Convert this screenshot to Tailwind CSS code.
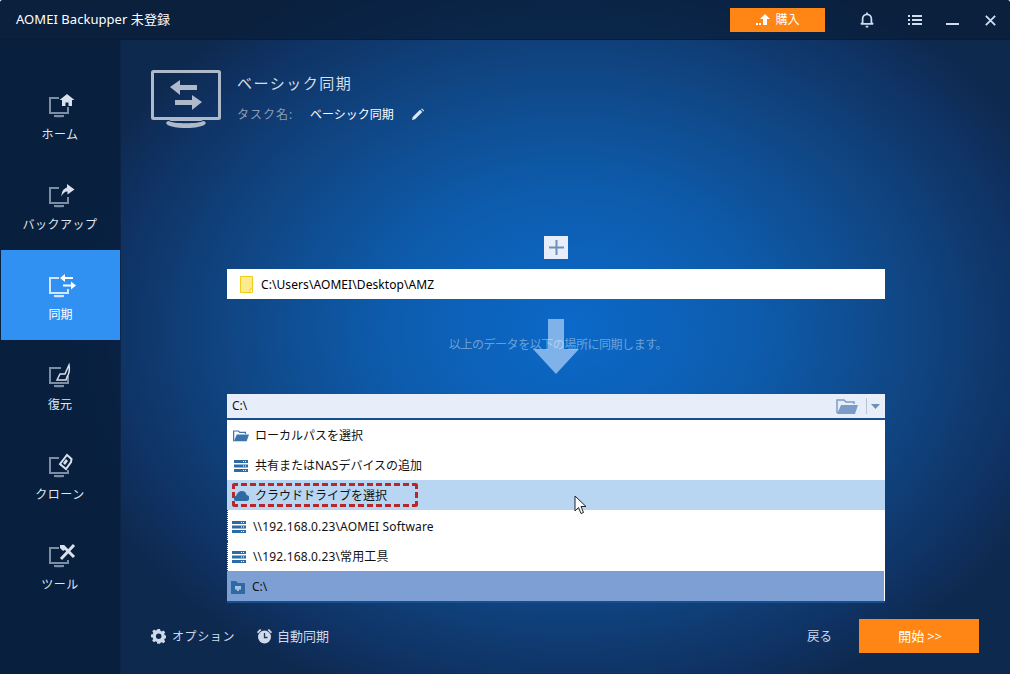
<!DOCTYPE html>
<html lang="ja">

<head>
    <meta charset="UTF-8">
    <script src="https://cdn.jsdelivr.net/npm/@tailwindcss/browser@4"></script>
    <title>AOMEI Backupper</title>
</head>

<body class="bg-white">
    <div class="relative w-[1010px] h-[674px] overflow-hidden flex flex-col rounded-t-[3px] text-[12px] font-['Noto_Sans','Noto_Sans_CJK_JP',sans-serif] bg-[radial-gradient(ellipse_520px_400px_at_570px_330px,#0b69c9_0%,#0d5cad_35%,#104684_65%,#0f3161_90%,#0e294e_100%)]">
        <!-- Title bar -->
        <header class="h-[40px] shrink-0 flex items-center bg-[#081c36]/70 border-b border-[#0a1c36] text-white">
            <span class="ml-[16px] text-[13px] tracking-[0.05px]">AOMEI Backupper 未登録</span>
            <button class="ml-auto w-[95px] h-[24px] flex items-center justify-center gap-[4px] bg-[#ff8615] text-[12px] pt-px">
                <svg width="16" height="14" viewBox="0 0 16 14" fill="#fff">
                    <path d="M10 1l5 5h-3v6H8V6H5z" />
                    <path d="M1 10h2v2H1zM4 10h2v2H4z" />
                </svg>
                購入
            </button>
            <div class="ml-[35px] mr-[14px] flex items-center text-[#cfdcef]">
                <svg width="14" height="17" viewBox="0 0 16 18" fill="none" stroke="currentColor" stroke-width="2">
                    <path d="M3 13V8a5 5 0 0 1 10 0v5l2 1H1z" />
                    <path d="M6.500 17h3M8 1v2" />
                </svg>
                <svg class="ml-[34px]" width="14" height="12" viewBox="0 0 14 12" fill="currentColor">
                    <path d="M0 1h2v2H0zM4 1h10v2H4zM0 5h2v2H0zM4 5h10v2H4zM0 9h2v2H0zM4 9h10v2H4z" />
                </svg>
                <span class="ml-[24px] w-[13px] h-[2px] mt-[8px] bg-current"></span>
                <svg class="ml-[26px] mt-[1px]" width="11" height="11" viewBox="0 0 13 13" fill="none" stroke="currentColor" stroke-width="2.200">
                    <path d="M1 1l11 11M12 1L1 12" />
                </svg>
            </div>
        </header>

        <div class="flex-1 flex min-h-0">
            <!-- Sidebar -->
            <nav class="w-[121px] shrink-0 pt-[30px] bg-[#081d39]/80 border-r border-[#0c2445] text-[#dfe7f2] flex flex-col">
                <a class="h-[90px] flex flex-col items-center pt-[22px] gap-[6px] tracking-[0.5px]">
                    <svg class="ml-[4px]" width="30" height="28" viewBox="0 0 30 28" fill="none">
                        <path d="M12 6H3v15h18v-6" stroke="#7d8da4" stroke-width="2" />
                        <path d="M7 23h10v2a12 3 0 0 1-10 0z" fill="#7d8da4" />
                        <path d="M20 2l7.500 6H25v6h-3.500v-3.500h-3V14H15V8h-2.500z" fill="#d8e0eb" />
                    </svg>
                    ホーム
                </a>
                <a class="h-[90px] flex flex-col items-center pt-[22px] gap-[6px] tracking-[0.5px]">
                    <svg class="ml-[4px]" width="30" height="28" viewBox="0 0 30 28" fill="none">
                        <path d="M12 6H3v15h18v-6" stroke="#7d8da4" stroke-width="2" />
                        <path d="M7 23h10v2a12 3 0 0 1-10 0z" fill="#7d8da4" />
                        <path d="M20 2l7.500 5.500-7 5v-3c-3 0-5 2-6 5 0-5 2-8 5.500-9z" fill="#d8e0eb" />
                    </svg>
                    バックアップ
                </a>
                <a class="h-[90px] ml-[1px] flex flex-col items-center pt-[22px] gap-[6px] bg-[#3191f3] text-white">
                    <svg class="ml-[3px]" width="30" height="28" viewBox="0 0 30 28" fill="none">
                        <path d="M12 6H3v15h18v-4" stroke="#d3e6fb" stroke-width="2" />
                        <path d="M7 23h10v2a12 3 0 0 1-10 0z" fill="#d3e6fb" />
                        <path d="M13 6l5-4v3h8v2h-8v3zM29 13.500l-5-4v3h-8v2h8v3z" fill="#fff" />
                    </svg>
                    同期
                </a>
                <a class="h-[90px] flex flex-col items-center pt-[22px] gap-[6px]">
                    <svg class="ml-[4px]" width="30" height="28" viewBox="0 0 30 28" fill="none">
                        <path d="M14 6H3v15h18v-7" stroke="#7d8da4" stroke-width="2" />
                        <path d="M7 23h10v2a12 3 0 0 1-10 0z" fill="#7d8da4" />
                        <path d="M10 18l3-6 5 0 4-9c1 5 0 9-2 12l-1 3z" fill="none" stroke="#d8e0eb" stroke-width="1.500" />
                    </svg>
                    復元
                </a>
                <a class="h-[90px] flex flex-col items-center pt-[22px] gap-[6px] tracking-[0.5px]">
                    <svg class="ml-[4px]" width="30" height="28" viewBox="0 0 30 28" fill="none">
                        <path d="M12 6H3v15h18v-3" stroke="#7d8da4" stroke-width="2" />
                        <path d="M7 23h10v2a12 3 0 0 1-10 0z" fill="#7d8da4" />
                        <path d="M20 3l4.500 4-.5 3-5 7-6-5z" stroke="#d8e0eb" stroke-width="2" />
                        <path d="M19 7l2 2-3 4-2-2z" fill="#d8e0eb" />
                    </svg>
                    クローン
                </a>
                <a class="h-[90px] flex flex-col items-center pt-[22px] gap-[6px] tracking-[0.5px]">
                    <svg class="ml-[4px]" width="30" height="28" viewBox="0 0 30 28" fill="none">
                        <path d="M12 6H3v15h18v-3" stroke="#7d8da4" stroke-width="2" />
                        <path d="M7 23h10v2a12 3 0 0 1-10 0z" fill="#7d8da4" />
                        <path d="M16 4l11 11" stroke="#d8e0eb" stroke-width="3" />
                        <path d="M27 3L14 17" stroke="#d8e0eb" stroke-width="3" />
                        <path d="M13 3h4l2 4-3 2-3-3z" fill="#d8e0eb" />
                    </svg>
                    ツール
                </a>
            </nav>

            <!-- Main -->
            <main class="relative flex-1 min-w-0 flex flex-col">
                <div class="h-[196px] shrink-0 pl-[30px] pt-[30px] flex items-start">
                    <svg width="72" height="60" viewBox="0 0 72 60" fill="none">
                        <rect x="1.500" y="1.500" width="67" height="47" stroke="#aeb9c9" stroke-width="3" rx="1" />
                        <path d="M18 50h34l-2 1h-30zM18 51c-6 1-3 7 17 7s23-6 17-7c-3 3-31 3-34 0z" fill="#aeb9c9" />
                        <path d="M19 17l10-7v5h17v5H29v5zM51 32l-10-7v5H24v5h17v5z" fill="#aeb9c9" />
                    </svg>
                    <div class="ml-[14px]">
                        <h1 class="mt-[2px] text-[15px] tracking-[1.500px] text-[#d5deea]">ベーシック同期</h1>
                        <div class="mt-[11px] flex items-center">
                            <span class="w-[73px] tracking-[1px] text-[#8c9cb2]">タスク名:</span>
                            <span class="text-white">ベーシック同期</span>
                            <svg class="ml-[17px]" width="13" height="13" viewBox="0 0 13 13" fill="#dfe6f0">
                                <path d="M1 12l.7-3L9 1.700 11.300 4 4 11.300zM10 1l1-.5 2 2-.5 1z" />
                            </svg>
                        </div>
                    </div>
                </div>

                <div class="ml-[106px] w-[658px] flex flex-col">
                    <div class="self-center w-[24px] h-[23px] flex items-center justify-center bg-[#e7eefa]">
                        <svg width="15" height="15" viewBox="0 0 15 15" fill="#6f8fb8">
                            <path d="M6.500 0h2v6.500H15v2H8.500V15h-2V8.500H0v-2h6.500z" />
                        </svg>
                    </div>
                    <div class="mt-[10px] h-[30px] flex items-center bg-white pl-[13px] text-black">
                        <svg width="13" height="17" viewBox="0 0 13 17">
                            <path d="M.5.5h12v16H.5z" fill="#fde98e" stroke="#f2cc1a" />
                            <path d="M10 13h2.500v3.500H10z" fill="#fff" stroke="#f2cc1a" />
                        </svg>
                        <span class="ml-[8px] pt-[2px] tracking-[0.08px]">C:\Users\AOMEI\Desktop\AMZ</span>
                    </div>

                    <div class="relative h-[95px] flex items-center justify-center">
                        <!-- big arrow behind the hint -->
                        <svg class="absolute left-[306px] top-[20px]" width="46" height="55" viewBox="0 0 46 55" fill="#7fb2e8">
                            <path d="M15 0h16v30h15L23 55 0 30h15z" />
                        </svg>
                        <span class="relative ml-[4px] mb-[4px] tracking-[-0.45px] text-white/40">以上のデータを以下の場所に同期します。</span>
                    </div>

                    <div class="h-[26px] flex items-center bg-[#e7eefa] border-b-2 border-[#164e8e] pl-[5px] text-[#111]">
                        <span>C:\</span>
                        <svg class="ml-auto" width="22" height="15" viewBox="0 0 22 15">
                            <path d="M1 14V1h7l2 2h8v2" fill="none" stroke="#7a9cc6" stroke-width="1.500" />
                            <path d="M5 6h17l-3 9H1z" fill="#7a9cc6" />
                        </svg>
                        <span class="ml-[8px] w-px h-[16px] bg-[#b9c4d3]"></span>
                        <svg class="ml-[4px] mr-[5px]" width="9" height="5" viewBox="0 0 9 5" fill="#6f8fb8">
                            <path d="M0 0h9L4.500 5z" />
                        </svg>
                    </div>

                    <ul class="bg-white text-[#111] border-b-2 border-[#164e8e]">
                        <li class="h-[30px] flex items-center pl-[6px] pt-[2px] gap-[6px]">
                            <svg width="16" height="12" viewBox="0 0 17 12">
                                <path d="M.7 11.500V.7h5l1.500 1.500h6v1.800" fill="none" stroke="#3e74ab" stroke-width="1.300" />
                                <path d="M4 4.500h13l-2.500 7H1z" fill="#3e74ab" />
                            </svg>
                            ローカルパスを選択
                        </li>
                        <li class="h-[30px] flex items-center pl-[7px] pt-[2px] gap-[7px]">
                            <svg width="14" height="12" viewBox="0 0 14 12" fill="#2e6aa3">
                                <path d="M0 0h14v3H0zM0 4.500h14v3H0zM0 9h14v3H0z" />
                                <path d="M9 1h1v1H9zM11 1h1v1h-1zM9 5.500h1v1H9zM11 5.500h1v1h-1zM9 10h1v1H9zM11 10h1v1h-1z" fill="#fff" />
                            </svg>
                            共有またはNASデバイスの追加
                        </li>
                        <li class="h-[30px] flex items-center pl-[6px] bg-[#b8d6f2]">
                            <div class="h-[24px] w-[186px] flex items-center gap-[6px] pt-px border-[3px] border-dashed border-[#b8262a] rounded-[3px] -ml-px">
                                <svg class="-ml-px" width="15" height="10" viewBox="0 0 15 10" fill="#2e6aa3">
                                    <path d="M2.500 10a2.500 2.500 0 0 1-.5-5C3 2 5 0 8 0c2.500 0 4 1.500 4.500 4A3 3 0 0 1 12 10z" />
                                </svg>
                                クラウドドライブを選択
                            </div>
                        </li>
                        <li class="h-[31px] flex items-center pl-[4px] pt-[2px] gap-[7px] tracking-[0.15px] border-l border-dotted border-[#164e8e]">
                            <svg width="14" height="12" viewBox="0 0 14 12" fill="#2e6aa3">
                                <path d="M0 0h14v3H0zM0 4.500h14v3H0zM0 9h14v3H0z" />
                                <path d="M9 1h1v1H9zM11 1h1v1h-1zM9 5.500h1v1H9zM11 5.500h1v1h-1zM9 10h1v1H9zM11 10h1v1h-1z" fill="#fff" />
                            </svg>
                            \\192.168.0.23\AOMEI Software
                        </li>
                        <li class="h-[30px] flex items-center pl-[4px] pt-[2px] gap-[7px] tracking-[0.15px] border-l border-dotted border-[#164e8e]">
                            <svg width="14" height="12" viewBox="0 0 14 12" fill="#2e6aa3">
                                <path d="M0 0h14v3H0zM0 4.500h14v3H0zM0 9h14v3H0z" />
                                <path d="M9 1h1v1H9zM11 1h1v1h-1zM9 5.500h1v1H9zM11 5.500h1v1h-1zM9 10h1v1H9zM11 10h1v1h-1z" fill="#fff" />
                            </svg>
                            \\192.168.0.23\常用工具
                        </li>
                        <li class="h-[30px] mr-px flex items-center pl-[4px] pt-[2px] gap-[7px] bg-[#7e9fd3]">
                            <svg width="14" height="13" viewBox="0 0 14 13" fill="#2e6aa3">
                                <path d="M0 0h5l2 2h7v11H0z" />
                                <path d="M4 5h6v3.500H8V10H6V8.500H4z" fill="#a9c3e4" />
                            </svg>
                            C:\
                        </li>
                    </ul>
                </div>

                <!-- Bottom bar -->
                <div class="mt-[16px] pl-[30px] pr-[31px] flex items-center text-[#cfd9e8]">
                    <svg width="15" height="15" viewBox="0 0 15 15" fill="#cfd9e8">
                        <path fill-rule="evenodd" d="M6 0h3l.4 2 1.500.6L12.600 1.500l2 2-1.100 1.700.6 1.500 2 .4v2.800l-2 .4-.6 1.500 1.100 1.700-2 2-1.700-1.100-1.500.6L9 16H6l-.4-2-1.500-.6-1.700 1.100-2-2 1.100-1.700L.9 9.300 -1 8.900V6.100l2-.4.6-1.500L.5 2.500l2-2 1.700 1.100 1.500-.6zM7.500 5a3 3 0 1 0 0 6 3 3 0 0 0 0-6z" transform="translate(0.800 0) scale(0.920)" />
                    </svg>
                    <span class="ml-[6px] pt-[2px] tracking-[0.600px]">オプション</span>
                    <svg class="ml-[21px]" width="17" height="16" viewBox="0 0 17 16">
                        <circle cx="8.500" cy="9" r="6.500" fill="#cfd9e8" />
                        <path d="M8.500 5v4.500h3" fill="none" stroke="#14365f" stroke-width="1.300" />
                        <path d="M1 4l3-3 1.500 1L2 5.500zM16 4l-3-3-1.500 1L15 5.500z" fill="#cfd9e8" />
                    </svg>
                    <span class="ml-[4px] pt-[2px] text-[13px]">自動同期</span>
                    <span class="ml-auto pt-[2px] text-[12.500px]">戻る</span>
                    <button class="ml-[27px] w-[120px] h-[34px] pt-[2px] pl-[2px] bg-[#ff8615] text-white text-[13px] tracking-[-0.2px]">開始 &gt;&gt;</button>
                </div>
            </main>
        </div>

        <!-- Mouse pointer -->
        <svg class="absolute left-[574px] top-[495px]" width="14" height="20" viewBox="0 0 14 20">
            <path d="M1 1v15l3.500-3.500 2.500 6 2.500-1-2.500-6H12z" fill="#fff" stroke="#222" />
        </svg>
    </div>
</body>

</html>
